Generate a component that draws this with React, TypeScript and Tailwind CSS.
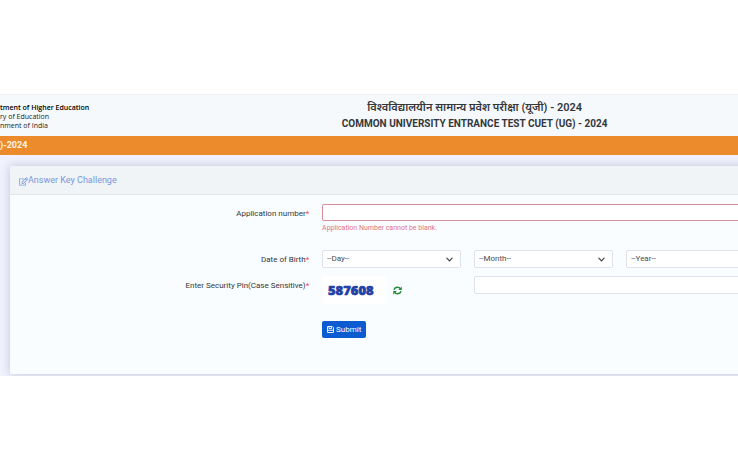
import { useState } from "react";
import { FaRegEdit } from "react-icons/fa";

interface DateSelectProps {
  id: string;
  label: string;
  placeholder: string;
  options: string[];
}

const range = (from: number, to: number) =>
  Array.from({ length: to - from + 1 }, (_, i) => String(from + i));

function DateSelect({ id, label, placeholder, options }: DateSelectProps) {
  return (
    <div className="relative col-span-2">
      <select
        id={id}
        aria-label={label}
        className="block h-[18px] w-full appearance-none rounded-xs border border-[#dde3e8] bg-white pl-1 pr-5 text-[8px] leading-4 text-[#4a4e52] outline-none"
      >
        <option value="">{placeholder}</option>
        {options.map((o) => (
          <option key={o}>{o}</option>
        ))}
      </select>
      <svg viewBox="0 0 16 16" className="pointer-events-none absolute right-2 top-1.5 h-[7px] w-[7px]" fill="none" stroke="#343a40" strokeWidth="2.6">
        <path d="m2 5 6 6 6-6" strokeLinecap="round" strokeLinejoin="round" />
      </svg>
    </div>
  );
}

function FieldLabel({ htmlFor, children }: { htmlFor: string; children: string }) {
  return (
    <label htmlFor={htmlFor} className="col-span-4 pt-1 text-right text-[8px] leading-3 text-[#33373b]">
      {children}
      <span className="text-[#ef4050]">*</span>
    </label>
  );
}

function SaveIcon() {
  return (
    <svg viewBox="0 0 14 14" className="h-[7px] w-[7px]" fill="none" stroke="currentColor" strokeWidth="1.8">
      <path d="M1 1h9.5L13 3.500V13H1z" strokeLinejoin="round" />
      <path d="M4 1v4h5V1M2 8.500h10" />
    </svg>
  );
}

function RefreshIcon() {
  return (
    <svg viewBox="0 0 18 18" className="h-[9px] w-[9px]" fill="none" stroke="currentColor" strokeWidth="2.8">
      <path d="M2 7.500C3 4 5.500 2.500 9 2.500c2.500 0 4.500 1 6 3M16 10.500C15 14 12.500 15.500 9 15.500c-2.500 0-4.500-1-6-3" />
      <path d="M17.500 1v7h-7zM.5 17v-7h7z" fill="currentColor" stroke="none" />
    </svg>
  );
}

export default function App() {
  const [appNumber, setAppNumber] = useState("");

  return (
    <div className="overflow-hidden bg-white py-[94px] font-['Roboto','Noto_Sans',sans-serif]">
      <div className="w-[127%] overflow-hidden bg-[#f1f2fd]">
        <header className="flex h-[42px] items-start border-t border-[#f1f3f4] bg-[#f6f9fc]">
          <div className="w-[87px] whitespace-nowrap pt-2 font-['Open_Sans',sans-serif] text-[7px] leading-[9px] text-[#222]">
            <p className="font-semibold text-black">tment of Higher Education</p>
            <p>ry of Education</p>
            <p>nment of India</p>
          </div>
          <div className="flex-1 pr-[75px] pt-[5px] text-center text-[#34373a]">
            <h2 className="text-[11px] font-semibold leading-4">विश्वविद्यालयीन सामान्य प्रवेश परीक्षा (यूजी) - 2024</h2>
            <h1 className="text-[10px] font-bold leading-4">COMMON UNIVERSITY ENTRANCE TEST CUET (UG) - 2024</h1>
          </div>
        </header>

        <div className="h-[19px] bg-[#ec8b2c]">
          <p className="text-[9px] font-bold leading-[19px] text-[#fff5e6]">)-2024</p>
        </div>

        <main className="px-2.5 pb-0.5 pt-[11px]">
          <section className="rounded-xs bg-[#fafdff] shadow-[0_0_10px_rgba(70,75,130,0.28)]">
            <div className="flex h-[29px] items-center border-b border-[#e4e8eb] bg-[#f1f4f7] px-[9px] pt-0.5 text-[9px] text-[#7797dc]">
              <FaRegEdit className="h-[9px] w-[9px]" />
              <h3>Answer Key Challenge</h3>
            </div>

            <form className="pb-9 pl-2 pr-2.5 pt-[9px]" onSubmit={(e) => e.preventDefault()}>
              <div className="grid grid-cols-12 gap-x-[13px]">
                <FieldLabel htmlFor="appno">Application number</FieldLabel>
                <div className="col-span-8">
                  <input
                    id="appno"
                    value={appNumber}
                    onChange={(e) => setAppNumber(e.target.value)}
                    className="block h-[17px] w-full rounded-xs border border-[#d68c96] bg-white px-1 text-[8px] outline-none"
                  />
                  <p className="pt-px text-[7px] leading-3 text-[#e07480]">Application Number cannot be blank.</p>
                </div>
              </div>

              <div className="mt-4 grid grid-cols-12 gap-x-[13px]">
                <FieldLabel htmlFor="day">Date of Birth</FieldLabel>
                <DateSelect id="day" label="Day" placeholder="--Day--" options={range(1, 31)} />
                <DateSelect id="month" label="Month" placeholder="--Month--" options={range(1, 12)} />
                <DateSelect id="year" label="Year" placeholder="--Year--" options={range(1970, 2010)} />
              </div>

              <div className="mt-2 grid grid-cols-12 gap-x-[13px]">
                <FieldLabel htmlFor="pin">Enter Security Pin(Case Sensitive)</FieldLabel>
                <div className="col-span-2 flex items-center">
                  <div className="flex h-7 w-16 items-center bg-white pl-1.5" aria-label="Security pin">
                    <svg viewBox="0 0 48 18" className="h-[18px] w-12" fill="#2340a5" stroke="#2340a5" strokeWidth="0.6" fontFamily="'Open Sans', sans-serif" fontWeight="800" fontSize="13">
                      <text x="0" y="14">587608</text>
                    </svg>
                  </div>
                  <button type="button" aria-label="Refresh pin" className="ml-[7px] text-[#218c38]">
                    <RefreshIcon />
                  </button>
                </div>
                <div className="col-span-6">
                  <input id="pin" className="block h-[18px] w-full rounded-xs border border-[#dde3e8] bg-white px-1 text-[8px] outline-none" />
                </div>
              </div>

              <div className="mt-[17px] grid grid-cols-12 gap-x-[13px]">
                <div className="col-span-8 col-start-5">
                  <button type="submit" className="flex h-[17px] items-center gap-0.5 rounded-xs bg-[#0d5bd0] px-[5px] text-[8px] leading-4 text-white">
                    <SaveIcon />
                    Submit
                  </button>
                </div>
              </div>
            </form>
          </section>
        </main>
      </div>
    </div>
  );
}
